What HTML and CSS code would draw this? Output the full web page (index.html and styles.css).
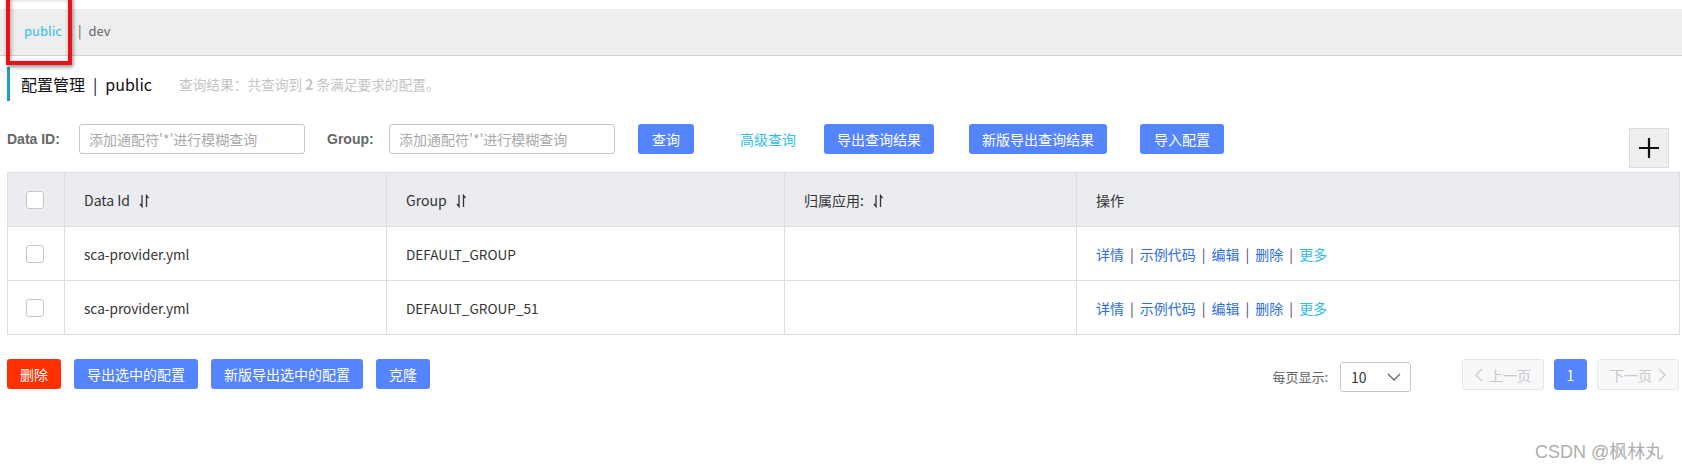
FILE: index.html
```html
<!DOCTYPE html>
<html lang="zh-CN">
<head>
<meta charset="utf-8">
<title>配置管理</title>
<link rel="stylesheet" href="styles.css">
</head>
<body>
<div class="page">
  <div class="tabs">
    <span class="tab tab-active">public</span>
    <span class="tab-sep">|</span>
    <span class="tab">dev</span>
  </div>
  <div class="annot"></div>

  <div class="title-row">
    <span class="title">配置管理</span>
    <span class="title-sep">|</span>
    <span class="title">public</span>
    <span class="result">查询结果：共查询到 <b>2</b> 条满足要求的配置。</span>
  </div>

  <div class="filter-row">
    <label class="lbl lbl-id">Data ID:</label>
    <input class="inp" type="text" placeholder="添加通配符'*'进行模糊查询">
    <label class="lbl lbl-group">Group:</label>
    <input class="inp" type="text" placeholder="添加通配符'*'进行模糊查询">
    <button class="btn btn-query">查询</button>
    <a class="adv">高级查询</a>
    <button class="btn btn-export">导出查询结果</button>
    <button class="btn btn-export2">新版导出查询结果</button>
    <button class="btn btn-import">导入配置</button>
    <button class="plus" aria-label="add">
      <svg width="22" height="22" viewBox="0 0 22 22"><path d="M11 1V21M1 11H21" stroke="#111" stroke-width="2.2" fill="none"/></svg>
    </button>
  </div>

  <table class="grid">
    <colgroup>
      <col class="c-chk"><col class="c-id"><col class="c-grp"><col class="c-app"><col class="c-op">
    </colgroup>
    <thead>
      <tr>
        <th><span class="chk"></span></th>
        <th>Data Id<svg class="sort" width="10" height="14" viewBox="0 0 10 14"><path d="M3 1V12.5L1 10M7.5 13V1.5L9.5 4" stroke="#333" stroke-width="1.3" fill="none"/></svg></th>
        <th>Group<svg class="sort" width="10" height="14" viewBox="0 0 10 14"><path d="M3 1V12.5L1 10M7.5 13V1.5L9.5 4" stroke="#333" stroke-width="1.3" fill="none"/></svg></th>
        <th>归属应用:<svg class="sort" width="10" height="14" viewBox="0 0 10 14"><path d="M3 1V12.5L1 10M7.5 13V1.5L9.5 4" stroke="#333" stroke-width="1.3" fill="none"/></svg></th>
        <th>操作</th>
      </tr>
    </thead>
    <tbody>
      <tr>
        <td><span class="chk"></span></td>
        <td>sca-provider.yml</td>
        <td>DEFAULT_GROUP</td>
        <td></td>
        <td class="ops"><a>详情</a><span class="sep">|</span><a>示例代码</a><span class="sep">|</span><a>编辑</a><span class="sep">|</span><a>删除</a><span class="sep">|</span><a class="more">更多</a></td>
      </tr>
      <tr>
        <td><span class="chk"></span></td>
        <td>sca-provider.yml</td>
        <td>DEFAULT_GROUP_51</td>
        <td></td>
        <td class="ops"><a>详情</a><span class="sep">|</span><a>示例代码</a><span class="sep">|</span><a>编辑</a><span class="sep">|</span><a>删除</a><span class="sep">|</span><a class="more">更多</a></td>
      </tr>
    </tbody>
  </table>

  <div class="bottom-row">
    <div class="actions">
      <button class="btn btn-danger">删除</button>
      <button class="btn">导出选中的配置</button>
      <button class="btn">新版导出选中的配置</button>
      <button class="btn">克隆</button>
    </div>
    <div class="pager">
      <span class="pp-label">每页显示:</span>
      <div class="select">
        <span>10</span>
        <svg width="14" height="8" viewBox="0 0 14 8"><path d="M1 1L7 7L13 1" stroke="#666" stroke-width="1.3" fill="none"/></svg>
      </div>
      <button class="pg pg-prev"><svg width="8" height="14" viewBox="0 0 8 14"><path d="M7 1L1 7L7 13" stroke="#ccc" stroke-width="1.3" fill="none"/></svg>上一页</button>
      <button class="pg pg-cur">1</button>
      <button class="pg pg-next">下一页<svg width="8" height="14" viewBox="0 0 8 14"><path d="M1 1L7 7L1 13" stroke="#ccc" stroke-width="1.3" fill="none"/></svg></button>
    </div>
  </div>

  <div class="watermark">CSDN @枫林丸</div>
</div>
</body>
</html>
```
FILE: styles.css
```css
html, body {
  margin: 0;
  padding: 0;
  background: #fff;
  overflow: hidden;
}
body {
  font-family: "Noto Sans CJK SC", "Noto Sans", sans-serif;
  font-size: 14px;
  color: #333;
}
.page {
  position: relative;
  width: 1682px;
  height: 468px;
  padding-top: 9px;
  box-sizing: border-box;
}
.tabs {
  height: 44px;
  padding-bottom: 2px;
  background: #eeeeee;
  border-bottom: 1px solid #d0d0d0;
  display: flex;
  align-items: center;
  padding-left: 24px;
  font-size: 13px;
  line-height: 20px;
}
.tab { color: #666; }
.tab-active { color: #33bde6; }
.tab-sep { color: #555; margin: 0 7px 0 16px; }
.annot {
  position: absolute;
  left: 6px;
  top: -6px;
  width: 58px;
  height: 63px;
  border: 4px solid #e5141b;
  box-shadow: 1px 2px 4px rgba(0,0,0,0.45), inset 1px 1px 4px rgba(0,0,0,0.35);
}
.title-row {
  margin: 11px 0 0 7px;
  height: 34px;
  border-left: 3px solid #1f9bd7;
  display: flex;
  align-items: center;
  padding-left: 11px;
}
.title { font-size: 16px; color: #111; }
.title-sep { font-size: 16px; color: #111; margin: 0 8px; }
.result {
  margin-left: 27px;
  color: #c4c4c4;
  font-size: 13.7px;
}
.result b { font-weight: bold; }
.filter-row {
  margin-top: 23px;
  height: 30px;
  display: flex;
  align-items: center;
  padding-left: 7px;
  position: relative;
}
.lbl {
  font-family: "Liberation Sans", Arial, sans-serif;
  font-weight: bold;
  font-size: 14px;
  color: #666;
}
.lbl-id { width: 57px; margin-right: 15px; }
.lbl-group { width: 48px; margin-left: 22px; margin-right: 14px; }
.inp {
  width: 226px;
  height: 30px;
  box-sizing: border-box;
  border: 1px solid #c4c6cf;
  border-radius: 3px;
  padding: 0 9px;
  font-family: inherit;
  font-size: 14px;
  color: #333;
  outline: none;
}
.inp::placeholder { color: #a9a9a9; }
.btn {
  height: 30px;
  padding: 0 13px;
  border: none;
  border-radius: 3px;
  background: #5584ff;
  color: #fff;
  font-family: inherit;
  font-size: 14px;
  line-height: 30px;
  cursor: pointer;
}
.btn-query { margin-left: 23px; padding: 0 14px; }
.adv { margin-left: 46px; color: #33bde6; font-size: 14px; }
.btn-export { margin-left: 28px; }
.btn-export2 { margin-left: 35px; }
.btn-import { margin-left: 33px; padding: 0 14px; }
.plus {
  margin-left: auto;
  margin-right: 13px;
  align-self: flex-start;
  margin-top: 4px;
  width: 40px;
  height: 40px;
  background: #eeeeee;
  border: 1px solid #dcdcdc;
  display: flex;
  align-items: center;
  justify-content: center;
  padding: 0;
}
.grid {
  margin: 18px 0 0 7px;
  width: 1672px;
  border-collapse: collapse;
  table-layout: fixed;
}
.c-chk { width: 57px; }
.c-id { width: 322px; }
.c-grp { width: 398px; }
.c-app { width: 292px; }
.c-op { width: 603px; }
.grid th, .grid td {
  border: 1px solid #dcdee3;
  height: 54px;
  padding: 0 19px;
  text-align: left;
  font-weight: normal;
  color: #333;
  font-size: 14px;
  box-sizing: border-box;
}
.grid td { font-size: 13.6px; }
.grid th { background: #ebecf0; }
.grid th:first-child, .grid td:first-child { padding: 0 0 0 18px; }
.sort { margin-left: 9px; vertical-align: -2px; }
.chk {
  display: block;
  width: 16px;
  height: 16px;
  border: 1px solid #c4c6cf;
  border-radius: 3px;
  background: #fff;
}
.ops a { color: #2f6fdc; font-size: 14px; }
.ops a.more { color: #33bde6; }
.ops .sep { color: #5a3a6a; margin: 0 6px; font-size: 14px; }
.bottom-row {
  margin-top: 24px;
  display: flex;
  align-items: flex-start;
  padding-left: 7px;
}
.actions { display: flex; gap: 13px; }
.btn-danger { background: #ff3000; }
.pager {
  margin-left: auto;
  margin-right: 3px;
  display: flex;
  align-items: flex-start;
}
.pp-label { color: #666; font-size: 13px; line-height: 30px; margin-top: 3px; }
.select {
  margin-left: 12px;
  margin-top: 3px;
  width: 71px;
  height: 30px;
  box-sizing: border-box;
  border: 1px solid #c4c6cf;
  border-radius: 3px;
  display: flex;
  align-items: center;
  justify-content: space-between;
  padding: 0 9px 0 10px;
  font-size: 14px;
  color: #333;
}
.pg {
  height: 31px;
  border: 1px solid #e6e7eb;
  border-radius: 3px;
  background: #f7f8fa;
  color: #c8c8c8;
  font-family: inherit;
  font-size: 14px;
  display: flex;
  align-items: center;
  padding: 0;
}
.pg-prev { margin-left: 51px; width: 82px; justify-content: center; gap: 6px; }
.pg-cur { margin-left: 10px; width: 33px; justify-content: center; background: #5584ff; border-color: #5584ff; color: #fff; }
.pg-next { margin-left: 10px; width: 82px; justify-content: center; gap: 6px; }
.watermark {
  position: absolute;
  left: 1535px;
  top: 437px;
  font-family: "Liberation Sans", "Noto Sans CJK SC", sans-serif;
  font-size: 18px;
  color: #adadad;
  text-shadow: 0 0 1px rgba(255,255,255,0.8);
}
```
